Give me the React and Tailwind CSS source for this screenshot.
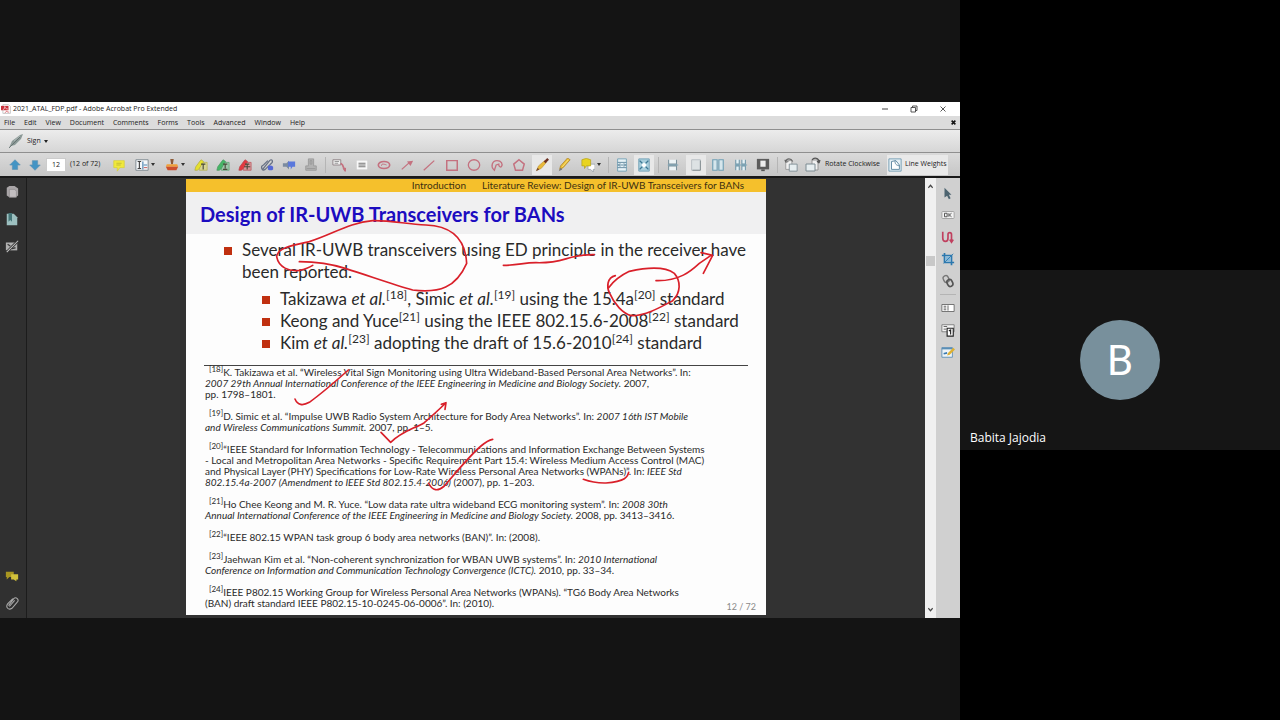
import clsx from "clsx";

const menus = ["File", "Edit", "View", "Document", "Comments", "Forms", "Tools", "Advanced", "Window", "Help"];

function Icon({ children, className }) {
  return (
    <svg viewBox="0 0 16 16" fill="none" aria-hidden="true" className={clsx("shrink-0", className || "size-4")}>
      {children}
    </svg>
  );
}

function Tool({ label, active, caret, children }) {
  return (
    <button
      type="button"
      aria-label={label}
      className={clsx(
        "h-5 shrink-0 flex items-center cursor-pointer",
        caret ? "w-7 pl-1" : "w-5 justify-center",
        active && "bg-[#e8e8e8]"
      )}
    >
      <Icon className="size-[14px]">{children}</Icon>
      {caret && (
        <svg viewBox="0 0 4 3" className="w-1 h-[3px] ml-[2px]" aria-hidden="true">
          <path d="M0 0h4L2 3z" fill="#333" />
        </svg>
      )}
    </button>
  );
}

function Divider() {
  return <span className="w-px h-4 shrink-0 bg-[#b5b5b5]" />;
}

function Highlighter({ color, edge, mark }) {
  return (
    <>
      <path d="M6 5h9v9H6z" fill={color} fillOpacity=".35" stroke={edge} strokeWidth=".7" />
      <path d="M1 14l1-4 6-8 3 2-5 8-2 2z" fill={color} stroke={edge} strokeWidth=".8" />
      <path d={mark} stroke="#4a4a3a" strokeWidth="1.300" />
    </>
  );
}

function SideTool({ label, children }) {
  return (
    <button type="button" aria-label={label} className="h-[22px] w-6 flex items-center justify-center cursor-pointer">
      <Icon className="size-[14px]">{children}</Icon>
    </button>
  );
}

function TitleBar() {
  return (
    <div className="h-[14px] bg-white flex items-center pl-px pr-[13px]">
      <Icon className="size-[10px]">
        <path d="M3 1h9l3 3v11H3z" fill="#fff" stroke="#aaa" />
        <path d="M0 3h12v7H0z" fill="#c8303a" />
        <path d="M3 9c3-1 4-4 3-5 0 3 3 4 5 4" stroke="#fff" />
        <path d="M6 14c2-1 3-2 3-3 1 2 2 2 4 2" stroke="#c8303a" />
      </Icon>
      <h1 className="ml-[2px] flex-1 text-[7px] leading-[14px] text-[#222]">2021_ATAL_FDP.pdf - Adobe Acrobat Pro Extended</h1>
      <div className="flex items-center gap-[21px]">
        <button type="button" aria-label="Minimize" className="cursor-pointer">
          <Icon className="size-2"><path d="M2 8h12" stroke="#444" strokeWidth="2" /></Icon>
        </button>
        <button type="button" aria-label="Restore" className="cursor-pointer">
          <Icon className="size-2"><path d="M2 5h9v9H2zM5 5V2h9v9h-3" stroke="#444" strokeWidth="1.800" /></Icon>
        </button>
        <button type="button" aria-label="Close" className="cursor-pointer">
          <Icon className="size-2"><path d="M3 3l10 10M13 3L3 13" stroke="#444" strokeWidth="1.800" /></Icon>
        </button>
      </div>
    </div>
  );
}

function MenuBar() {
  return (
    <nav className="h-[14px] pl-1 pr-1 bg-[#dcdcdc] border-b border-[#8f8f8f] flex items-center gap-[9px]">
      {menus.map((m) => (
        <button key={m} type="button" className="text-[7px] leading-3 text-[#222] cursor-pointer">{m}</button>
      ))}
      <button type="button" aria-label="Close document" className="ml-auto cursor-pointer">
        <Icon className="size-[5px]"><path d="M2 2l12 12M14 2L2 14" stroke="#111" strokeWidth="5" /></Icon>
      </button>
    </nav>
  );
}

function SignBar() {
  return (
    <div className="h-[23px] pl-2 bg-gradient-to-b from-[#ececec] to-[#d6d6d6] border-b border-[#8f8f8f] flex items-center">
      <button type="button" className="flex items-center gap-[3px] text-[7px] text-[#222] cursor-pointer">
        <Icon>
          <path d="M1 15L4 8l8-6 3-1-2 5-6 6-4 1z" fill="#8b9896" />
          <path d="M1 15L12 4" stroke="#5d6b69" strokeWidth=".8" />
          <path d="M7 12l6-6M6 8l6-5" stroke="#b9c4c2" strokeWidth=".7" />
        </Icon>
        Sign
        <svg viewBox="0 0 4 3" className="w-1 h-[3px]" aria-hidden="true"><path d="M0 0h4L2 3z" fill="#222" /></svg>
      </button>
    </div>
  );
}

function ToolBar() {
  const red = "#c4717f";
  const blue = "#6f9fb5";
  return (
    <div className="h-[23px] pl-[5px] bg-gradient-to-b from-[#dadada] to-[#c6c6c6] flex items-center">
      <Tool label="Previous page">
        <path d="M8 2l6 6h-3v5H5V8H2z" fill="#4394c4" stroke="#5f93b3" strokeWidth=".8" />
      </Tool>
      <Tool label="Next page">
        <path d="M8 14L2 8h3V3h6v5h3z" fill="#4394c4" stroke="#5f93b3" strokeWidth=".8" />
      </Tool>
      <input
        aria-label="Page number"
        defaultValue="12"
        className="ml-px w-5 h-[14px] bg-white border border-[#ccc] text-[7px] text-center text-[#222] outline-none"
      />
      <span className="ml-1 w-[39px] text-[7px] text-[#222] whitespace-nowrap">(12 of 72)</span>

      <div className="w-[212px] shrink-0 flex justify-between">
        <Tool label="Sticky note">
          <path d="M2 3h12v8H9l-3 4v-4H2z" fill="#f0e93c" stroke="#d6cd3c" strokeWidth=".8" />
          <path d="M5 6h6M5 8h5" stroke="#b5ac35" strokeWidth=".8" />
        </Tool>
        <Tool label="Text edits" caret>
          <path d="M1 2h14v12H1z" fill="#f5f8fa" stroke="#77838c" />
          <path d="M3 4h4M5 4v8M3 12h4" stroke="#444" strokeWidth="1.300" />
          <path d="M9 4v9M10 8h4" stroke="#4c85b1" strokeWidth="1.300" />
          <path d="M10 11h4" stroke="#c04a4a" />
        </Tool>
        <Tool label="Stamp" caret>
          <path d="M6 1h4l-1 6H7z" fill="#8d5b38" />
          <path d="M2 7h12l1 3H1z" fill="#f0a03a" />
          <path d="M1 10h14l-2 4H3z" fill="#cd4f2d" />
        </Tool>
        <Tool label="Highlight text">
          <Highlighter color="#e6e02f" edge="#b5ae38" mark="M8 7h5M10.500 7v6" />
        </Tool>
        <Tool label="Underline text">
          <Highlighter color="#46b566" edge="#4a9a60" mark="M8 7h5M10.500 7v5M8 13h5" />
        </Tool>
        <Tool label="Cross out text">
          <Highlighter color="#e23a40" edge="#b8444a" mark="M8 7h5M10.500 7v6M7 10h7" />
        </Tool>
        <Tool label="Attach file">
          <path d="M3 13L11 3q2-2 3 0t-2 4L6 13q-3 2-4-1t2-4l5-5" stroke="#667083" strokeWidth="1.400" />
          <path d="M9 9q4-1 6 1v3q-3 2-6 0z" fill="#5468d6" />
        </Tool>
        <Tool label="Record audio">
          <path d="M1 6h4l3-3v10L5 10H1z" fill="#7b8ba0" />
          <path d="M7 4h8v6h-3l-2 3v-3H7z" fill="#5a78dc" />
        </Tool>
        <Tool label="Add video">
          <path d="M5 1h6v8h3v5H2V9h3z" fill="#b2b2b2" stroke="#989898" />
          <path d="M7 3h2v4H7zM3 12h10" stroke="#989898" />
        </Tool>
      </div>
      <span className="w-2 shrink-0 flex justify-center"><Divider /></span>

      <div className="w-[276px] shrink-0 flex justify-between">
        <Tool label="Callout">
          <path d="M1 2h9v6H1z" fill="#eee" stroke="#8c7f82" />
          <path d="M3 4h5M3 6h4" stroke="#777" strokeWidth=".8" />
          <path d="M10 6l2 2 3 7" stroke={red} strokeWidth="2" />
          <path d="M12 12l4 4v-5z" fill={red} />
        </Tool>
        <Tool label="Text box">
          <path d="M2 3h12v10H2z" fill="#f8f8f8" />
          <path d="M4 6h8M4 8h8M4 10h8" stroke="#555" strokeWidth=".9" />
        </Tool>
        <Tool label="Cloud">
          <ellipse cx="8" cy="8" rx="6.500" ry="4" stroke={red} strokeWidth="1.900" />
          <path d="M5 9q0-3 3-2t3 1" stroke={red} />
        </Tool>
        <Tool label="Arrow">
          <path d="M2 13l9-8" stroke={red} strokeWidth="1.500" />
          <path d="M15 3L8 4l4 5z" fill={red} />
        </Tool>
        <Tool label="Line"><path d="M2 14L14 3" stroke={red} strokeWidth="1.500" /></Tool>
        <Tool label="Rectangle"><path d="M2 3h12v11H2z" stroke={red} strokeWidth="1.700" /></Tool>
        <Tool label="Oval"><ellipse cx="8" cy="8" rx="6.500" ry="6" stroke={red} strokeWidth="1.500" /></Tool>
        <Tool label="Polyline">
          <path d="M4 13C1 10 2 3 8 3c5 0 7 4 5 7-2 1-3-1-3-3L7 8l-2 6z" stroke={red} strokeWidth="1.500" />
        </Tool>
        <Tool label="Polygon"><path d="M8 2l6 5-2 7H4L2 7z" stroke={red} strokeWidth="1.700" /></Tool>
        <Tool label="Pencil" active>
          <path d="M2 14l2-5 7-6 2 2-6 7z" fill="#e8b93a" stroke="#b98a21" strokeWidth=".6" />
          <path d="M10 4l4-4 2 2-4 4z" fill="#6c3022" />
          <path d="M1 15l2-4 2 2z" fill="#7a4a2a" />
        </Tool>
        <Tool label="Pencil eraser">
          <path d="M3 13l1-4 8-9 3 2-8 9z" fill="#e9bd34" stroke="#a67d23" strokeWidth=".8" />
          <path d="M6 10l7-8" stroke="#fbe78a" />
          <path d="M4 11l-2 4 4-2z" fill="#777" />
        </Tool>
        <Tool label="Show comments" caret>
          <path d="M8 7h8v6h-2v3l-3-3H8z" fill="#fff" stroke="#8f9aa2" strokeWidth=".8" />
          <path d="M1 2q5-3 10 0v7H6l-2 3V9H1z" fill="#e9d421" stroke="#b5a11a" strokeWidth=".8" />
        </Tool>
      </div>
      <span className="w-[7px] shrink-0 flex justify-center"><Divider /></span>

      <div className="w-[42px] shrink-0 flex justify-between">
        <Tool label="Fit width">
          <path d="M3 1h10v14H3z" fill="#e7f2f6" stroke={blue} />
          <path d="M3 8h10M6 6L4 8l2 2M10 6l2 2-2 2M3 5h10M3 11h10" stroke="#5a8299" />
        </Tool>
        <Tool label="Fit page" active>
          <path d="M2 1h12v14H2z" fill="#a9cfdd" stroke={blue} />
          <path d="M3 3l3 3M13 3l-3 3M3 13l3-3M13 13l-3-3" stroke="#3d7894" strokeWidth="1.600" />
          <path d="M5 8l3-3 3 3-3 3z" fill="#fff" />
        </Tool>
      </div>
      <span className="w-[9px] shrink-0 flex justify-center"><Divider /></span>
      <div className="w-[110px] shrink-0 flex justify-between">
        <Tool label="Continuous pages">
          <path d="M3 2v5h9V2M3 14V9h9v5" fill="#edf4f6" stroke="#7c929c" strokeWidth="1.200" />
          <path d="M2 8h12" stroke={blue} />
        </Tool>
        <Tool label="Single page" active>
          <path d="M3 2h10v12H3z" fill="#dde2e4" stroke="#b5bcc0" />
          <path d="M13 3v11H4" stroke="#7e878c" />
        </Tool>
        <Tool label="Two pages">
          <path d="M2 2h5v12H2zM9 2h5v12H9z" fill="#d6e6ec" stroke={blue} strokeWidth="1.300" />
        </Tool>
        <Tool label="Two pages continuous">
          <path d="M2 2v5h4V2M9 2v5h4V2M2 14V9h4v5M9 14V9h4v5" fill="#e5f1f5" stroke="#6e95a7" strokeWidth="1.200" />
          <path d="M1 8h14" stroke={blue} />
        </Tool>
        <Tool label="Full screen">
          <path d="M1 1h14v12H1z" fill="#5c5c5c" />
          <path d="M5 3h6v7H5z" fill="#eee" />
          <path d="M6 13h4v2H6z" fill="#555" />
        </Tool>
      </div>
      <span className="w-2 shrink-0 flex justify-center"><Divider /></span>

      <Tool label="Rotate counterclockwise">
        <path d="M2 3h7v10H2z" fill="#f1f1f1" stroke="#969696" />
        <path d="M6 7h9v8H6z" fill="#e7eef0" stroke="#7d8b92" />
        <path d="M2 4c1-4 6-4 8 0M2 5L1 2M2 5l3-1" stroke="#666" strokeWidth="1.200" />
      </Tool>
      <button type="button" className="ml-1 flex items-center gap-1 text-[7px] text-[#222] whitespace-nowrap cursor-pointer">
        <Icon>
          <path d="M7 3h6v10H7z" fill="#f1f1f1" stroke="#969696" />
          <path d="M1 7h9v7H1z" fill="#e7eef0" stroke="#7d8b92" />
          <path d="M14 5c0-4-5-5-7-2M14 6l1-3M14 6l-2-2" stroke="#555" strokeWidth="1.200" />
        </Icon>
        Rotate Clockwise
      </button>
      <button type="button" className="ml-[7px] h-5 px-px flex items-center gap-[3px] bg-[#e9e9e9] text-[7px] text-[#222] whitespace-nowrap cursor-pointer">
        <Icon className="size-[14px]">
          <path d="M1 1h14v14H1z" fill="#e6f0f5" stroke="#6d98b0" />
          <path d="M4 13V4l5-1 4 5v5z" fill="#fff" stroke="#55809a" />
          <path d="M8 3c0 4 1 5 5 6" stroke="#55809a" />
        </Icon>
        Line Weights
      </button>
    </div>
  );
}

function LeftRail() {
  return (
    <aside className="w-[27px] shrink-0 bg-[#303030] border-r border-[#1c1c1c] flex flex-col justify-between pb-[2px]">
      <div>
        <button type="button" aria-label="Pages" className="h-[27px] w-6 flex items-center justify-center cursor-pointer">
          <Icon className="size-[14px]">
            <path d="M2 3l3-2h6l4 3v8l-3 2H5l-3-2z" fill="#a9a5a7" />
            <path d="M5 5h6l2 2v7H5z" fill="#c3bfc1" stroke="#8a8688" strokeWidth=".7" />
          </Icon>
        </button>
        <button type="button" aria-label="Bookmarks" className="h-[27px] w-6 flex items-center justify-center cursor-pointer">
          <Icon className="size-[14px]">
            <path d="M2 2h8l4 4v9H2z" fill="#9dc0c0" />
            <path d="M4 1h4v10L6 9l-2 2z" fill="#447577" />
          </Icon>
        </button>
        <button type="button" aria-label="Signatures" className="h-[27px] w-6 flex items-center justify-center cursor-pointer">
          <Icon className="size-[14px]">
            <path d="M1 4h13v9H1z" fill="#b0b0b0" />
            <path d="M3 6l3 2M8 11l4-1" stroke="#3b3b3b" strokeWidth="1.500" />
            <path d="M2 15L15 2" stroke="#303030" strokeWidth="3" />
            <path d="M2 15L15 2" stroke="#c4c4c4" strokeWidth="1.200" />
          </Icon>
        </button>
      </div>
      <div>
        <button type="button" aria-label="Comments" className="h-[27px] w-6 flex items-center justify-center cursor-pointer">
          <Icon className="size-[14px]">
            <path d="M1 3h9v6H5l-3 3V9H1z" fill="#a99621" />
            <path d="M7 6h8v6h-2v2l-3-2H7z" fill="#d2c13b" />
          </Icon>
        </button>
        <button type="button" aria-label="Attachments" className="h-[27px] w-6 flex items-center justify-center cursor-pointer">
          <Icon className="size-[14px]">
            <path d="M4 11l6-8q2-2 4 0t0 4l-6 7q-3 2-5 0t0-5l6-6M5 12l6-7" stroke="#a9a9a9" strokeWidth="1.200" />
          </Icon>
        </button>
      </div>
    </aside>
  );
}

function RightRail() {
  return (
    <aside className="w-6 shrink-0 bg-[#d0d0d0] flex flex-col pt-1">
      <SideTool label="Select"><path d="M4 2l8 8H9l2 4-2 1-2-4-3 2z" fill="#4d6470" /></SideTool>
      <SideTool label="Button form field">
        <rect x="1" y="4" width="14" height="8" rx="1" fill="#f2f2f2" stroke="#9b9b9b" />
        <path d="M4 6h3v4H4zM9 6v4M12 6L9.500 8l2.500 2" stroke="#444" />
      </SideTool>
      <SideTool label="Article">
        <path d="M2 2v7q0 4 3 4t3-4V5q0-2 2-2t2 2v8M10 11l2 3 2-3" stroke="#c0405f" strokeWidth="1.900" />
      </SideTool>
      <SideTool label="Crop">
        <path d="M4 1v11h11M1 4h11v11" stroke="#2c78ae" strokeWidth="1.900" />
        <path d="M5 5h6v6H5z" fill="#84b8da" />
        <path d="M3 13L14 2" stroke="#2c78ae" />
      </SideTool>
      <SideTool label="Link">
        <g transform="rotate(-25 8 8)">
          <rect x="4" y="1" width="6" height="8" rx="3" stroke="#777" strokeWidth="1.600" />
          <rect x="6" y="7" width="6" height="8" rx="3" stroke="#555" strokeWidth="1.900" />
        </g>
      </SideTool>
      <span className="mx-1 mt-[2px] mb-[2px] h-px bg-[#b4b4b4]" />
      <SideTool label="Text field">
        <path d="M1 4h14v8H1z" fill="#fff" stroke="#666" />
        <path d="M3 6h3M3 8h3M3 10h3M8 5v6" stroke="#555" />
      </SideTool>
      <SideTool label="Page fields">
        <path d="M1 2h14v8H1z" fill="#f5f5f5" stroke="#777" />
        <path d="M3 4h4M3 7h3" stroke="#555" />
        <path d="M7 6h7v9H7z" fill="#fff" stroke="#222" strokeWidth="1.300" />
        <path d="M9 9l2-1v5" stroke="#222" strokeWidth="1.300" />
      </SideTool>
      <SideTool label="Edit form">
        <path d="M1 3h12v11H1z" fill="#eef4f8" stroke="#5a8eb5" />
        <path d="M1 3h12v2H1z" fill="#5a8eb5" />
        <path d="M3 10l4-1" stroke="#3a7ab0" strokeWidth="2" />
        <path d="M7 12l1-3 6-6 2 2-6 6z" fill="#ddb032" />
      </SideTool>
    </aside>
  );
}

function Cite({ n }) {
  return <sup className="text-[12px]">[{n}]</sup>;
}

function Ref({ n, children }) {
  return (
    <li>
      <sup className="ml-1 text-[8px]">[{n}]</sup>
      {children}
    </li>
  );
}

function Bullet({ children }) {
  return (
    <li className="flex gap-[10px]">
      <span className="mt-[8px] size-2 shrink-0 bg-[#c03010]" />
      <div>{children}</div>
    </li>
  );
}

function Ink() {
  return (
    <svg viewBox="0 9 1740 1308" className="absolute inset-0 size-full pointer-events-none" aria-hidden="true">
      <g fill="none" stroke="#d9202a" strokeWidth="5" strokeLinecap="round" strokeLinejoin="round">
        <path d="M340 257C400 257 440 265 480 278C550 300 620 325 680 342C760 352 810 335 842 262C838 190 800 150 720 147C660 145 620 133 560 134C490 140 440 175 370 197C320 208 275 215 272 242C278 275 310 287 340 283Q365 278 380 268" />
        <path d="M952 268C1000 268 1010 260 1050 260C1110 262 1130 250 1160 243Q1200 235 1225 236" />
        <path d="M1288 299C1262 305 1262 335 1270 350C1285 385 1310 412 1335 419C1380 420 1430 390 1460 374C1485 350 1485 315 1465 292C1435 270 1380 275 1330 286Q1290 305 1268 335" />
        <path d="M1410 314C1480 316 1515 285 1540 262L1575 238M1545 230L1580 238L1552 292" />
        <path d="M327 669C335 688 350 690 370 679C410 650 450 615 487 582" />
        <path d="M585 769L614 799C650 765 680 760 715 740Q755 705 779 681M766 685L780 680L777 700" />
        <path d="M728 922C740 945 755 947 775 930C810 890 850 840 885 810Q905 793 920 790" />
        <path d="M1192 910Q1225 922 1260 921Q1300 917 1315 908Q1325 902 1328 889" />
      </g>
    </svg>
  );
}

function Slide() {
  return (
    <article className="relative w-[580px] h-[436px] bg-[#fdfdfd] font-['Lato',sans-serif] text-[#2a2a2a] whitespace-nowrap flex flex-col">
      <div className="h-[13px] shrink-0 pr-[22px] bg-[#f5c02c] flex justify-end gap-4 text-[10px] leading-[13px] text-[#3d3010]">
        <span>Introduction</span>
        <span>Literature Review: Design of IR-UWB Transceivers for BANs</span>
      </div>
      <h2 className="h-[42px] shrink-0 pl-[14px] bg-[#f0f0f1] text-[20px] leading-[44px] font-bold text-[#1c0cc0]">
        Design of IR-UWB Transceivers for BANs
      </h2>
      <ul className="pt-[5px] pl-[38px] text-[17px] leading-[22px]">
        <Bullet>
          Several IR-UWB transceivers using ED principle in the receiver have
          <br />
          been reported.
          <ul className="mt-[5px] pl-5">
            <Bullet>
              Takizawa <i>et al.</i><Cite n={18} />, Simic <i>et al.</i><Cite n={19} /> using the 15.4a<Cite n={20} /> standard
            </Bullet>
            <Bullet>
              Keong and Yuce<Cite n={21} /> using the IEEE 802.15.6-2008<Cite n={22} /> standard
            </Bullet>
            <Bullet>
              Kim <i>et al.</i><Cite n={23} /> adopting the draft of 15.6-2010<Cite n={24} /> standard
            </Bullet>
          </ul>
        </Bullet>
      </ul>
      <hr className="mt-[11px] mx-[18px] border-[#444]" />
      <ol className="mt-px pl-[19px] flex flex-col gap-[11px] text-[10px] leading-[11px]">
        <Ref n={18}>
          K. Takizawa et al. “Wireless Vital Sign Monitoring using Ultra Wideband-Based Personal Area Networks”. In:
          <br />
          <i>2007 29th Annual International Conference of the IEEE Engineering in Medicine and Biology Society.</i> 2007,
          <br />
          pp. 1798–1801.
        </Ref>
        <Ref n={19}>
          D. Simic et al. “Impulse UWB Radio System Architecture for Body Area Networks”. In: <i>2007 16th IST Mobile</i>
          <br />
          <i>and Wireless Communications Summit.</i> 2007, pp. 1–5.
        </Ref>
        <Ref n={20}>
          “IEEE Standard for Information Technology - Telecommunications and Information Exchange Between Systems
          <br />
          - Local and Metropolitan Area Networks - Specific Requirement Part 15.4: Wireless Medium Access Control (MAC)
          <br />
          and Physical Layer (PHY) Specifications for Low-Rate Wireless Personal Area Networks (WPANs)”. In: <i>IEEE Std</i>
          <br />
          <i>802.15.4a-2007 (Amendment to IEEE Std 802.15.4-2006)</i> (2007), pp. 1–203.
        </Ref>
        <Ref n={21}>
          Ho Chee Keong and M. R. Yuce. “Low data rate ultra wideband ECG monitoring system”. In: <i>2008 30th</i>
          <br />
          <i>Annual International Conference of the IEEE Engineering in Medicine and Biology Society.</i> 2008, pp. 3413–3416.
        </Ref>
        <Ref n={22}>“IEEE 802.15 WPAN task group 6 body area networks (BAN)”. In: (2008).</Ref>
        <Ref n={23}>
          Jaehwan Kim et al. “Non-coherent synchronization for WBAN UWB systems”. In: <i>2010 International</i>
          <br />
          <i>Conference on Information and Communication Technology Convergence (ICTC).</i> 2010, pp. 33–34.
        </Ref>
        <Ref n={24}>
          IEEE P802.15 Working Group for Wireless Personal Area Networks (WPANs). “TG6 Body Area Networks
          <br />
          (BAN) draft standard IEEE P802.15-10-0245-06-0006”. In: (2010).
        </Ref>
      </ol>
      <span className="absolute right-[10px] bottom-[2px] text-[9px] leading-3 text-[#8a8a8a]">12 / 72</span>
      <Ink />
    </article>
  );
}

function ScrollBar() {
  return (
    <div className="w-[11px] shrink-0 bg-[#f0f0f0] flex flex-col items-center justify-between py-[6px]">
      <Icon className="size-[5px]"><path d="M1 12l7-8 7 8" stroke="#444" strokeWidth="4" /></Icon>
      <span className="w-[9px] h-[10px] -mt-[274px] bg-[#c8c8c8]" />
      <Icon className="size-[5px]"><path d="M1 4l7 8 7-8" stroke="#444" strokeWidth="4" /></Icon>
    </div>
  );
}

export default function App() {
  return (
    <div className="min-h-screen flex bg-black font-['Open_Sans','Noto_Sans',sans-serif]">
      <main className="w-3/4 bg-[#141414] flex flex-col justify-center">
        <TitleBar />
        <MenuBar />
        <SignBar />
        <ToolBar />
        <div className="border-t-2 border-[#181818] bg-[#323232] flex">
          <LeftRail />
          <div className="flex-1 pt-px pb-[3px] flex justify-center">
            <Slide />
          </div>
          <ScrollBar />
          <RightRail />
        </div>
      </main>
      <section className="w-1/4 flex flex-col justify-center">
        <div className="relative h-[180px] bg-[#151515] flex items-center justify-center">
          <span className="size-20 rounded-full bg-[#78909c] flex items-center justify-center font-['Roboto',sans-serif] text-[42px] text-white">
            B
          </span>
          <p className="absolute left-[10px] bottom-1 text-[12px] leading-4 text-white">Babita Jajodia</p>
        </div>
      </section>
    </div>
  );
}
